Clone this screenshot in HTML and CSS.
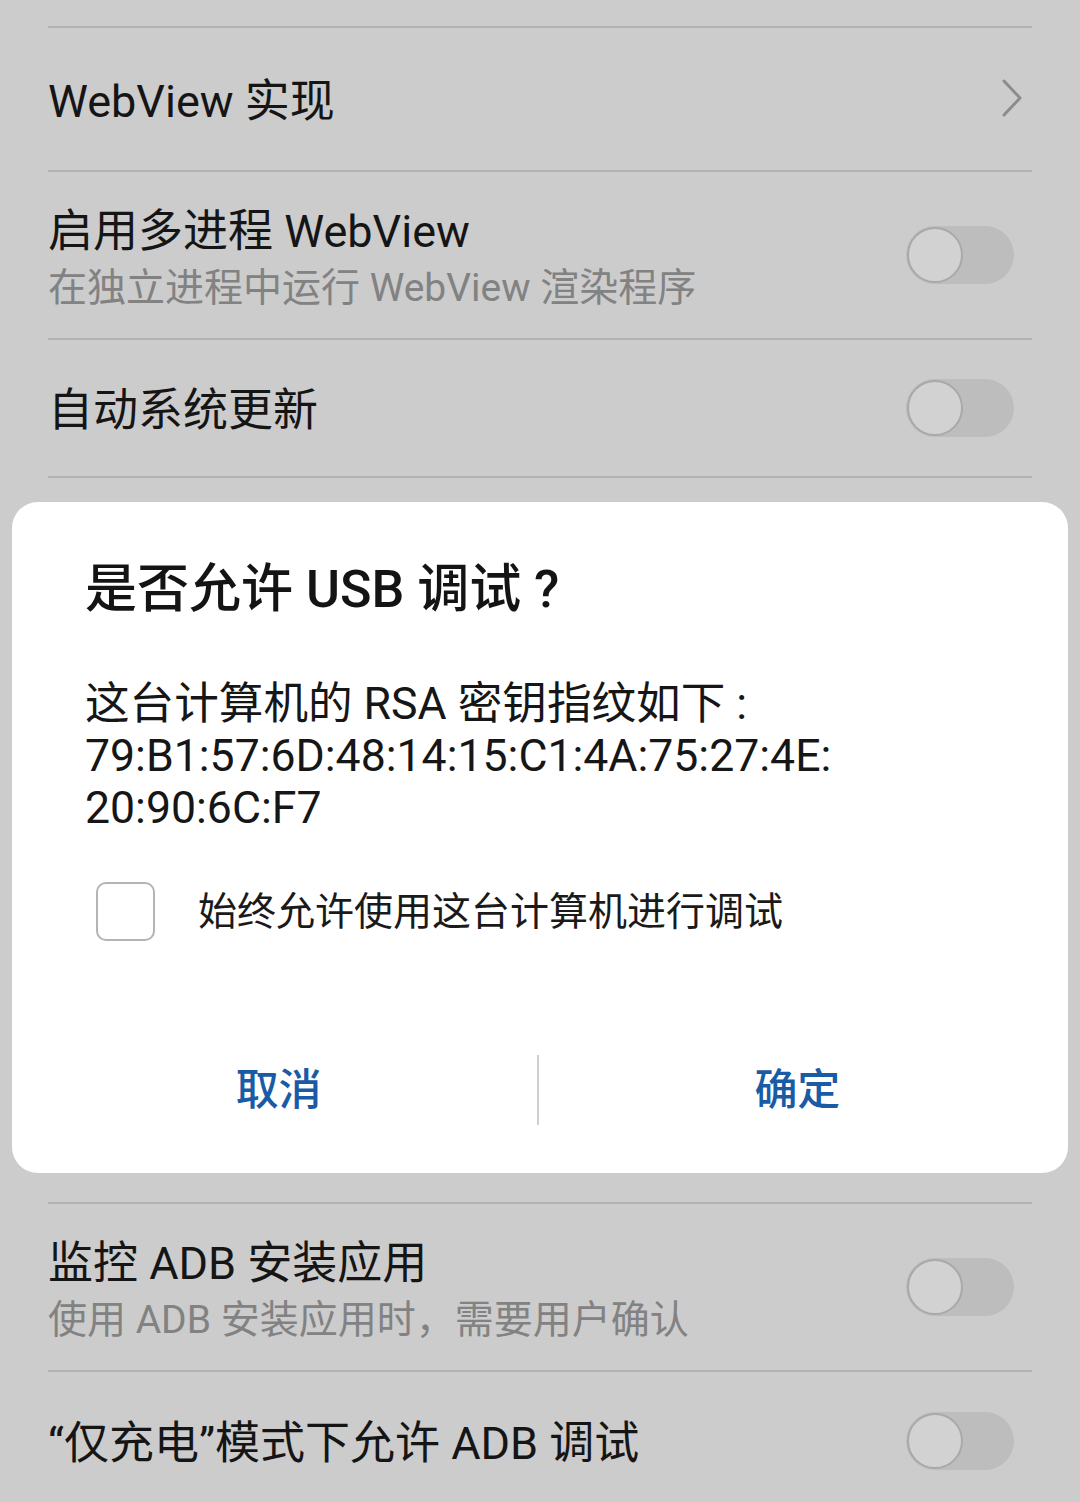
FILE: index.html
```html
<!DOCTYPE html>
<html lang="zh-CN">
<head>
<meta charset="utf-8">
<link rel="stylesheet" href="styles.css">
</head>
<body>
<div class="screen">
  <div class="list">
    <div class="top-gap"></div>
    <div class="row row-nav">
      <div class="row-text"><div class="title">WebView 实现</div></div>
      <svg class="chevron" width="24" height="40" viewBox="0 0 24 40"><polyline points="4,3 20,20 4,37" fill="none" stroke="#8c8c8c" stroke-width="3" stroke-linejoin="round" stroke-linecap="round"/></svg>
    </div>
    <div class="row row-two">
      <div class="row-text">
        <div class="title">启用多进程 WebView</div>
        <div class="sub">在独立进程中运行 WebView 渲染程序</div>
      </div>
      <div class="toggle"><div class="knob"></div></div>
    </div>
    <div class="row row-one">
      <div class="row-text"><div class="title">自动系统更新</div></div>
      <div class="toggle"><div class="knob"></div></div>
    </div>
    <div class="row row-hidden"></div>
    <div class="row row-two">
      <div class="row-text">
        <div class="title">监控 ADB 安装应用</div>
        <div class="sub">使用 ADB 安装应用时，需要用户确认</div>
      </div>
      <div class="toggle"><div class="knob"></div></div>
    </div>
    <div class="row row-last">
      <div class="row-text"><div class="title">“仅充电”模式下允许 ADB 调试</div></div>
      <div class="toggle"><div class="knob"></div></div>
    </div>
  </div>

  <div class="dialog">
    <div class="dlg-title">是否允许 USB 调试 ?</div>
    <div class="dlg-body">这台计算机的 RSA 密钥指纹如下 :<br>79:B1:57:6D:48:14:15:C1:4A:75:27:4E:<br>20:90:6C:F7</div>
    <div class="dlg-check">
      <div class="checkbox"></div>
      <div class="check-label">始终允许使用这台计算机进行调试</div>
    </div>
    <div class="dlg-buttons">
      <div class="btn btn-left">取消</div>
      <div class="btn-sep"></div>
      <div class="btn btn-right">确定</div>
    </div>
  </div>
</div>
</body>
</html>
```

FILE: styles.css
```css
html, body {
  margin: 0;
  padding: 0;
}
body {
  background: #cccccc;
  font-family: "Roboto", "Noto Sans CJK SC", sans-serif;
  color: #161616;
}
.screen {
  position: relative;
  width: 1080px;
  height: 1502px;
  overflow: hidden;
  background: #cccccc;
}
.list {
  padding: 0 48px;
}
.top-gap {
  height: 26px;
}
.row {
  display: flex;
  align-items: center;
  justify-content: space-between;
  border-top: 2px solid #b2b2b2;
  box-sizing: border-box;
}
.row-nav { height: 144px; }
.row-two { height: 168px; }
.row-one { height: 138px; }
.row-hidden { height: 726px; }
.row-last { height: 140px; }
.row-text {
  display: flex;
  flex-direction: column;
  padding-top: 6px;
}
.title {
  font-size: 45px;
  line-height: 56px;
  color: #151515;
}
.row-two .title { margin-top: 4px; }
.sub {
  font-size: 39px;
  line-height: 56px;
  color: #828282;
}
.chevron {
  margin-right: 8px;
  margin-top: -2px;
}
.toggle {
  position: relative;
  width: 108px;
  height: 58px;
  border-radius: 29px;
  background: #bdbdbd;
  margin-right: 18px;
}
.knob {
  position: absolute;
  left: 1px;
  top: 1px;
  width: 52px;
  height: 52px;
  border-radius: 50%;
  background: #d2d2d2;
  border: 2px solid #a9a9a9;
}
.dialog {
  position: absolute;
  left: 12px;
  top: 502px;
  width: 1056px;
  height: 671px;
  box-sizing: border-box;
  background: #ffffff;
  border-radius: 26px;
  padding: 58px 0 33px;
  display: flex;
  flex-direction: column;
}
.dlg-title {
  padding: 0 73px;
  font-size: 52px;
  line-height: 60px;
  font-weight: 500;
  color: #141414;
}
.dlg-body {
  margin-top: 58px;
  padding: 0 73px;
  font-size: 44.6px;
  line-height: 52px;
  color: #161616;
}
.dlg-check {
  margin-top: 48px;
  padding: 0 84px;
  display: flex;
  align-items: center;
}
.checkbox {
  width: 59px;
  height: 59px;
  box-sizing: border-box;
  border: 2.5px solid #b4b4b4;
  border-radius: 10px;
  flex: none;
}
.check-label {
  margin-left: 43px;
  font-size: 39px;
  line-height: 56px;
  color: #1a1a1a;
}
.dlg-buttons {
  margin-top: auto;
  height: 100px;
  display: flex;
  align-items: center;
}
.btn {
  flex: 1;
  text-align: center;
  font-size: 43px;
  font-weight: 500;
  color: #1a5ba6;
  line-height: 100px;
}
.btn-left { padding-left: 8px; }
.btn-right { padding-right: 12px; }
.btn-sep {
  width: 1.5px;
  height: 70px;
  background: #cfcfcf;
}
```
